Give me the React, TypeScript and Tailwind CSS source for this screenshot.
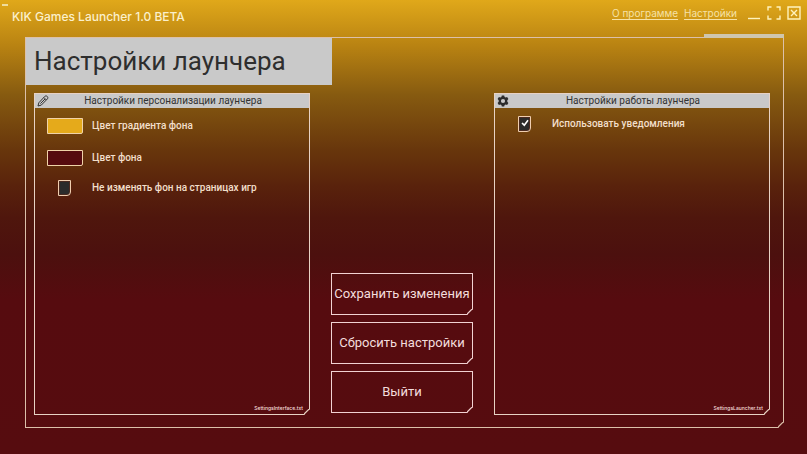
import type { ReactNode } from "react";

/* Diagonal stroke that closes the cut bottom-right corner of a frame. */
function CutCorner() {
  return (
    <svg className="pointer-events-none absolute -right-px -bottom-px h-1.5 w-1.5" viewBox="0 0 6 6" aria-hidden="true">
      <path d="M6 0L0 6" stroke="currentColor" strokeWidth="2.4" />
    </svg>
  );
}

const cut = "[clip-path:polygon(0_0,100%_0,100%_calc(100%-6px),calc(100%-6px)_100%,0_100%)]";

function Pencil() {
  return (
    <svg className="h-3 w-3" viewBox="0 0 12 12" fill="none" stroke="#333" strokeWidth="1" strokeLinejoin="round" aria-hidden="true">
      <path d="M1 11L1.8 7.8L7.8 1.4C9.4 0 11.8 2 10.4 3.9L4.3 10.1Z" />
      <path d="M7 2.6L9.4 5M3.4 8.6L8 4" />
    </svg>
  );
}

function Gear() {
  return (
    <svg className="h-3 w-3" viewBox="0 0 12 12" aria-hidden="true">
      <path
        fill="#2c2c2c"
        fillRule="evenodd"
        d="M4.8 0.4h2.4l.4 1.5 1 .6 1.5-.5 1.3 2.1-1.1 1.1v1.6l1.1 1.1-1.3 2.1-1.5-.5-1 .6-.4 1.5H4.8l-.4-1.5-1-.6-1.5.5L.6 7.9l1.1-1.1V5.2L.6 4.1 1.9 2l1.5.5 1-.6zM6 3.9a2.1 2.1 0 1 0 0 4.2 2.1 2.1 0 0 0 0-4.2z"
      />
    </svg>
  );
}

type PanelProps = { title: string; icon: ReactNode; file: string; children: ReactNode };

function Panel({ title, icon, file, children }: PanelProps) {
  return (
    <section className={`relative flex flex-col border border-[#e8d2c4] text-[#e8d2c4] ${cut}`}>
      <header className="flex h-3.5 items-center bg-[#c9c9c9] pl-0.5 text-[#333]">
        {icon}
        <h2 className="flex-1 pr-3 text-center font-[Roboto,sans-serif] text-[10px] leading-4">{title}</h2>
      </header>
      <div className="flex-1 pt-2 font-[Roboto,sans-serif] text-[10px] font-medium text-[#f2dfca]">{children}</div>
      <p className="pr-1.5 pb-0.5 text-right text-[5px] leading-2 font-medium text-[#f6dcdc]">{file}</p>
      <CutCorner />
    </section>
  );
}

function ColorSetting({ id, label, swatch }: { id: string; label: string; swatch: string }) {
  return (
    <div className="flex h-5 items-center">
      <button id={id} type="button" aria-label={label} className={`ml-3 h-4 w-9 rounded-br-xs border border-[#f0d2a8] ${swatch}`} />
      <label htmlFor={id} className="ml-[9px] leading-[18px]">{label}</label>
    </div>
  );
}

function CheckSetting({ id, label, checked }: { id: string; label: string; checked?: boolean }) {
  return (
    <div className="flex h-4 items-center">
      <span className="relative ml-[23px] flex">
        <input
          id={id}
          type="checkbox"
          defaultChecked={checked}
          className="peer h-4 w-[13px] appearance-none rounded-br-sm border border-[#f0ceb0] bg-[#2b2b2b] shadow-[inset_0_0_0_1px_#4a2a20]"
        />
        <svg className="pointer-events-none absolute top-0.5 left-0.5 hidden h-2.5 w-2.5 peer-checked:block" viewBox="0 0 10 10" fill="none" stroke="#fff" strokeWidth="1.6" aria-hidden="true">
          <path d="M2 5L4.3 7.2L8 2.2" />
        </svg>
      </span>
      <label htmlFor={id} className="ml-[21px] leading-[18px]">{label}</label>
    </div>
  );
}

function ActionButton({ children }: { children: ReactNode }) {
  return (
    <button type="button" className={`relative h-[42px] border border-[#f2d2d2] font-[Roboto,sans-serif] text-[13px] whitespace-nowrap text-[#f2d2d2] ${cut}`}>
      <span className="text-[#f3dddd]">{children}</span>
      <CutCorner />
    </button>
  );
}

export default function App() {
  return (
    <div className="flex min-h-screen flex-col bg-[linear-gradient(#e0a81a_0%,#b98312_10%,#865a10_21%,#68360c_33%,#59220c_41%,#4f160d_48%,#4c100e_56%,#560b0f_66%,#560c0f_100%)] font-[Inter,'Noto_Sans',sans-serif]">
      <header className="relative flex h-[37px] items-start justify-between pr-1.5 pl-3">
        <span className="absolute top-1 left-0.5 h-0.5 w-1.5 bg-[#efdc9c]" />
        <h1 className="pt-2 text-[12px] leading-[18px] font-medium text-[#fbf0cb]">KIK Games Launcher 1.0 BETA</h1>
        <nav className="flex items-start pt-1 text-[10px] leading-[18px] text-[#f6e2a6]">
          <a href="#about" className="mr-1.5 underline underline-offset-2">О программе</a>
          <a href="#settings" className="mr-2.5 underline underline-offset-2">Настройки</a>
          <div className="flex items-center gap-1.5 pt-0.5">
            <button type="button" aria-label="Свернуть" className="h-3.5 w-3.5">
              <svg viewBox="0 0 14 14" stroke="#fff3bd" strokeWidth="1.4"><path d="M1 12.5H13" /></svg>
            </button>
            <button type="button" aria-label="Развернуть" className="h-3.5 w-3.5">
              <svg viewBox="0 0 14 14" fill="none" stroke="#fff3bd" strokeWidth="1.4">
                <path d="M1 4.5V1H4.5M9.5 1H13V4.5M13 9.5V13H9.5M4.5 13H1V9.5" />
              </svg>
            </button>
            <button type="button" aria-label="Закрыть" className="h-3.5 w-3.5">
              <svg viewBox="0 0 14 14" fill="none" stroke="#fff3bd" strokeWidth="1.4">
                <path d="M1 1H13V13H1ZM4 4L10 10M10 4L4 10" />
              </svg>
            </button>
          </div>
        </nav>
      </header>

      <div className="relative mr-[23px] mb-[26px] ml-[25px] flex flex-1 flex-col">
        <span className="absolute -top-[3px] right-0 z-10 h-1 w-20 bg-[#cfc6ae]" />
        <main className={`relative flex flex-1 flex-col border border-[#dcc0aa] text-[#dcc0aa] ${cut}`}>
          <h2 className="flex h-[47px] w-[306px] items-center bg-[#c9c9c9] pl-2 font-[Roboto,sans-serif] text-[26px] whitespace-nowrap text-[#2e2e2e]">
            Настройки лаунчера
          </h2>
          <div className="mt-2 mr-[13px] mb-3 ml-2 grid flex-1 grid-cols-[3fr_2fr_3fr]">
            <Panel title="Настройки персонализации лаунчера" icon={<Pencil />} file="SettingsInterface.txt">
              <div className="flex flex-col gap-3">
                <ColorSetting id="gradient-color" label="Цвет градиента фона" swatch="bg-[#e5aa1b]" />
                <ColorSetting id="background-color" label="Цвет фона" swatch="bg-[#560b0f]" />
                <CheckSetting id="keep-background" label="Не изменять фон на страницах игр" />
              </div>
            </Panel>
            <div className="flex flex-col justify-end gap-[7px] px-[21px] pb-0.5">
              <ActionButton>Сохранить изменения</ActionButton>
              <ActionButton>Сбросить настройки</ActionButton>
              <ActionButton>Выйти</ActionButton>
            </div>
            <Panel title="Настройки работы лаунчера" icon={<Gear />} file="SettingsLauncher.txt">
              <CheckSetting id="notifications" label="Использовать уведомления" checked />
            </Panel>
          </div>
          <CutCorner />
        </main>
      </div>
    </div>
  );
}
